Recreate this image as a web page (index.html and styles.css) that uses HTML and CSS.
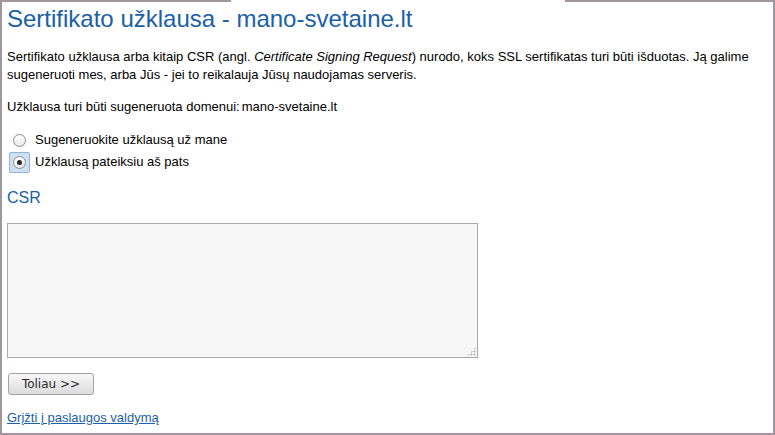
FILE: index.html
```html
<!DOCTYPE html>
<html lang="lt">
<head>
<meta charset="utf-8">
<title>Sertifikato užklausa</title>
<link rel="stylesheet" href="styles.css">
</head>
<body>
<div class="frame">
  <h1 class="title">Sertifikato užklausa - mano-svetaine.lt</h1>
  <p class="intro">Sertifikato užklausa arba kitaip CSR (angl. <em>Certificate Signing Request</em>) nurodo, koks SSL sertifikatas turi būti išduotas. Ją galime sugeneruoti mes, arba Jūs - jei to reikalauja Jūsų naudojamas serveris.</p>
  <p class="domain">Užklausa turi būti sugeneruota domenui:<span class="domain-name">mano-svetaine.lt</span></p>
  <div class="choices">
    <label class="choice"><span class="radio-box"><input type="radio" name="mode" class="radio"></span><span class="choice-text">Sugeneruokite užklausą už mane</span></label>
    <label class="choice"><span class="radio-box is-focused"><input type="radio" name="mode" class="radio" checked></span><span class="choice-text">Užklausą pateiksiu aš pats</span></label>
  </div>
  <h2 class="csr-title">CSR</h2>
  <div class="csr-wrap"><textarea class="csr"></textarea></div>
  <div class="actions"><button class="next" type="button">Toliau &gt;&gt;</button></div>
  <a class="back" href="#">Grįžti į paslaugos valdymą</a>
</div>
</body>
</html>
```
FILE: styles.css
```css
html, body {
  margin: 0;
  padding: 0;
  background: #fff;
}

.frame {
  box-sizing: border-box;
  width: 775px;
  height: 435px;
  padding: 5px 7px 0 7px;
  border-left: 2px solid #a3959c;
  border-right: 2px solid #a3959c;
  border-bottom: 2px solid #a3959c;
  background: linear-gradient(to right, #a3959c 229px, transparent 229px, transparent 563px, #a3959c 563px) top left / 100% 2px no-repeat, #fff;
  font-family: "Liberation Sans", Arial, sans-serif;
  font-size: 13px;
  color: #000;
  display: flex;
  flex-direction: column;
  align-items: flex-start;
}

.title {
  margin: 0 0 0 -2px;
  font-size: 24px;
  line-height: 28px;
  font-weight: normal;
  color: #1a60a8;
}

.intro {
  margin: 15px 0 0 -2px;
  line-height: 18px;
}

.domain {
  margin: 14px 0 0 -2px;
  line-height: 18px;
}

.domain-name {
  margin-left: 2px;
}

.choices {
  margin-top: 13px;
  display: flex;
  flex-direction: column;
}

.choice {
  display: flex;
  align-items: center;
  height: 22px;
  line-height: 22px;
  gap: 5px;
}

.radio-box {
  box-sizing: border-box;
  width: 21px;
  height: 21px;
  display: flex;
  align-items: center;
  justify-content: center;
  border: 1px solid transparent;
  border-radius: 2px;
}

.radio-box.is-focused {
  background: #cfe0f2;
  border-color: #8fb3d9;
}

.radio {
  appearance: none;
  -webkit-appearance: none;
  box-sizing: border-box;
  margin: 0;
  width: 13px;
  height: 13px;
  border-radius: 50%;
  border: 1px solid #8c8c8c;
  background: linear-gradient(#ffffff, #e9e9e9);
  display: flex;
  align-items: center;
  justify-content: center;
}

.radio:checked::after {
  content: "";
  width: 5px;
  height: 5px;
  border-radius: 50%;
  background: #2b2b2b;
}

.choice-text {
  color: #000;
}

.csr-title {
  margin: 15px 0 0 -2px;
  font-size: 16px;
  line-height: 20px;
  font-weight: normal;
  color: #1a60a8;
}

.csr-wrap {
  position: relative;
  margin: 15px 0 0 -2px;
  width: 471px;
  height: 135px;
}

.csr-wrap::after {
  content: "";
  position: absolute;
  right: 2px;
  bottom: 2px;
  width: 9px;
  height: 9px;
  background: radial-gradient(circle, #b4b4b4 0.9px, transparent 1.1px) 0 0 / 3px 3px;
  clip-path: polygon(100% 0, 100% 100%, 0 100%);
  pointer-events: none;
}

.csr {
  display: block;
  box-sizing: border-box;
  margin: 0;
  width: 471px;
  height: 135px;
  border: 1px solid #a9a9a9;
  background: #f6f6f6;
  padding: 2px;
  resize: none;
  font-family: "Liberation Mono", monospace;
  font-size: 13px;
}

.actions {
  margin-top: 15px;
}

.next {
  box-sizing: border-box;
  width: 86px;
  height: 22px;
  margin: 0 0 0 -1px;
  padding: 0;
  border: 1px solid #a4a4a4;
  border-radius: 3px;
  background: linear-gradient(#f8f8f8, #dcdcdc);
  font-family: "DejaVu Sans", sans-serif;
  font-size: 12px;
  color: #2a2a2a;
}

.back {
  margin: 14px 0 0 -2px;
  line-height: 18px;
  color: #1a60a8;
  text-decoration: underline;
}
```
